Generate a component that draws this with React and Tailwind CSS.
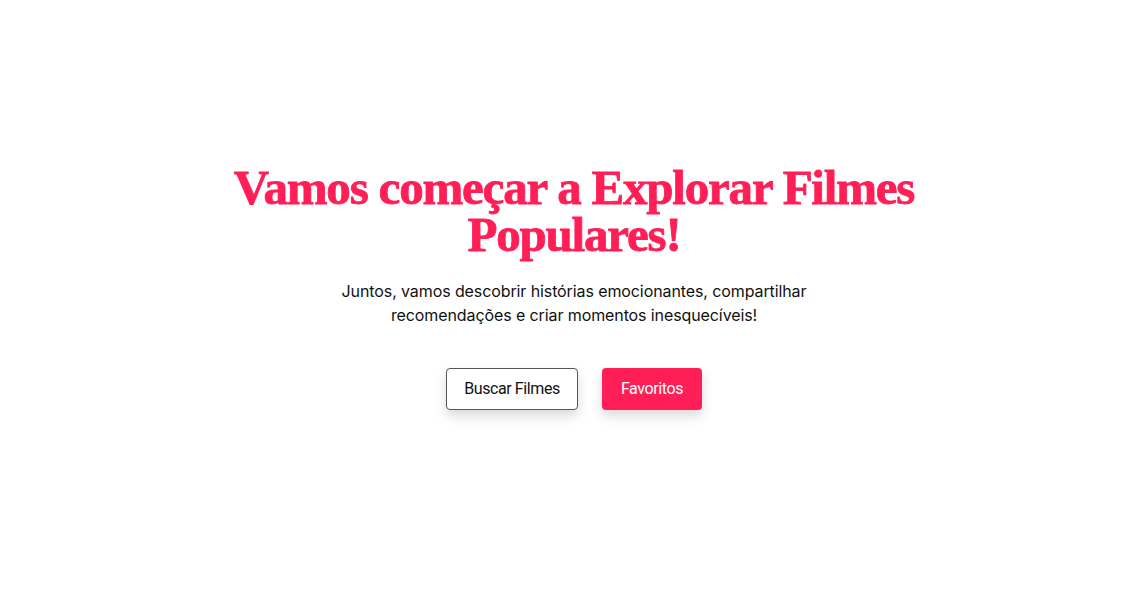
export default function App() {
  return (
    <div className="min-h-[615px] w-full bg-white flex flex-col items-center pt-[164px]">
      <h1
        className="text-[49px] leading-[47px] font-bold text-[#ff1e56] text-center tracking-[-1.2px] w-[760px] [-webkit-text-stroke:0.8px_#ff1e56]"
        style={{ fontFamily: '"Liberation Serif", serif' }}
      >
        Vamos começar a Explorar Filmes Populares!
      </h1>
      <p
        className="mt-[21px] text-[16px] leading-[24px] text-[#111] text-center w-[500px] tracking-[-0.1px]"
        style={{ fontFamily: "Inter, sans-serif" }}
      >
        Juntos, vamos descobrir histórias emocionantes, compartilhar recomendações e criar momentos inesquecíveis!
      </p>
      <div className="mt-[41px] flex gap-[24px]" style={{ fontFamily: "Roboto, sans-serif" }}>
        <button className="w-[132px] h-[42px] border border-[#555] rounded-[4px] bg-white text-[#111] text-[16px] tracking-[-0.4px] shadow-[0_6px_12px_rgba(0,0,0,0.15)]">
          Buscar Filmes
        </button>
        <button className="w-[100px] h-[42px] rounded-[4px] bg-[#ff1e56] text-white text-[16px] tracking-[-0.4px] shadow-[0_6px_12px_rgba(0,0,0,0.15)]">
          Favoritos
        </button>
      </div>
    </div>
  );
}
